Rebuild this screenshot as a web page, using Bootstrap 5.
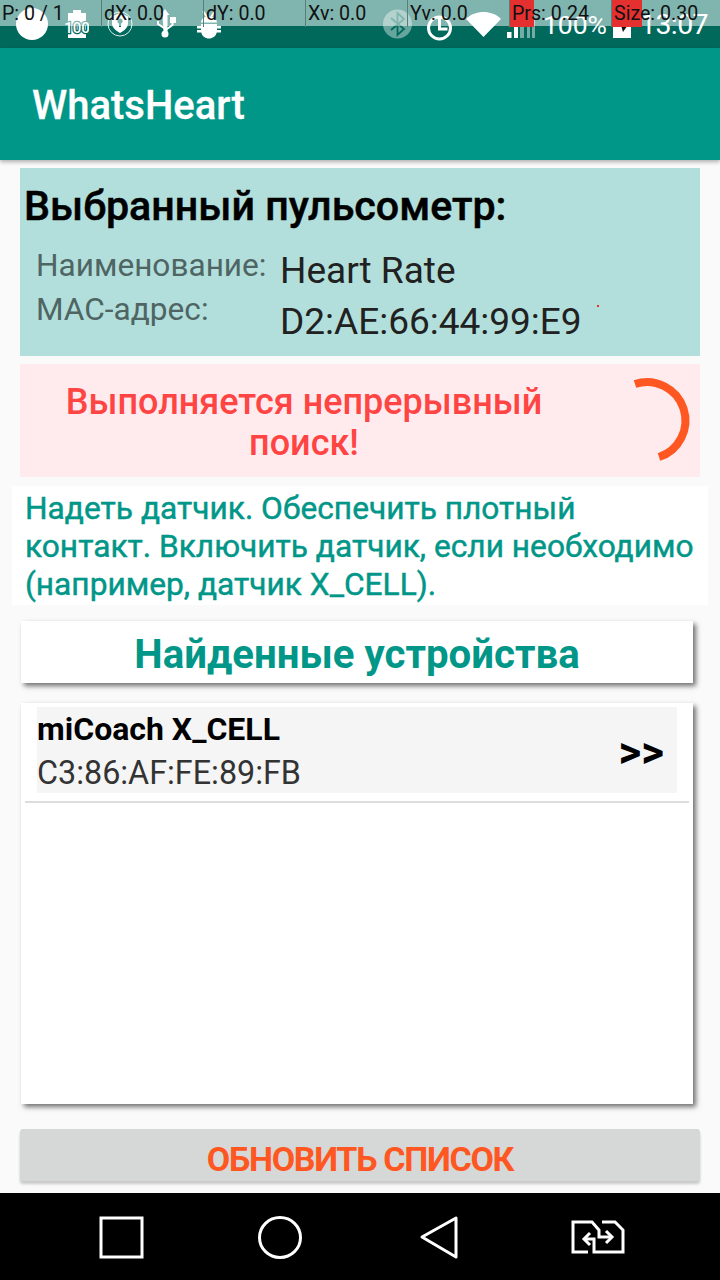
<!DOCTYPE html>
<html lang="ru"><head><meta charset="utf-8">
<link href="https://cdn.jsdelivr.net/npm/bootstrap@5.3.0/dist/css/bootstrap.min.css" rel="stylesheet">
<style>
html,body{width:720px;height:1280px;overflow:hidden}
body{background:#fafafa;font-family:Roboto,"Noto Sans",sans-serif;color:#212121}
.shell{height:1280px;width:720px}
.statusbar{height:48px;background:#00695c;position:relative;color:#fff}
.debug{position:absolute;left:0;top:0;width:720px;height:26px;background:rgba(255,255,255,.5);z-index:2;color:#111;font-size:19.6px;line-height:27px;display:grid;grid-template-columns:repeat(6,102px) 1fr}
.dcell{position:relative;padding-left:2px;white-space:nowrap}
.dcell:nth-child(n+2){border-left:1px solid #567f78;margin-left:-1px}
.dtxt{position:relative}
.dbar{position:absolute;left:0;top:0;bottom:0;background:#e53030}
.stat-row{position:absolute;left:0;right:0;top:0;height:48px;padding:0 12px 0 16px}
.stat-time{font-size:28.5px;letter-spacing:-.6px;line-height:50px;margin-left:9px}
.stat-pct{font-size:26.5px;line-height:50px;margin-left:7px}
.appbar{height:112px;background:#009688;color:#fff;font-size:40px;font-weight:500;padding-left:32px;box-shadow:0 2px 4px rgba(0,0,0,.3);line-height:116px;position:relative;-webkit-text-stroke:.3px #fff}
.content{height:1033px;padding-top:8px}
.chosen{margin:0 20px;height:188px;background:#b2dfdb;padding:16px 4px 0 4px;position:relative}
.chosen-title{font-size:41.2px;font-weight:500;color:#000;line-height:44px;-webkit-text-stroke:.5px #000;white-space:nowrap}
.chosen-grid{margin-top:17px;padding-left:12px}
.lbl{font-size:31.6px;width:244px;color:#4f6563;line-height:43.5px;flex:none;margin-top:-1px}
.val{font-size:37px;color:#212121;line-height:51px;white-space:nowrap}
.dot{position:absolute;left:577px;top:137px;width:2px;height:2px;background:#e53030}
.searching{margin:8px 20px 0;height:113px;background:#ffebee;position:relative;padding-top:18px}
.search-txt{width:568px;text-align:center;font-size:36px;line-height:41px;font-weight:500;color:#ff4444}
.spin{position:absolute;left:593px;top:5px}
.hint{margin:9px 12px 0;height:119px;background:#fff;padding:4px 12px 0 13px;font-size:31.7px;line-height:38px;color:#009688;font-weight:400;-webkit-text-stroke:.45px #009688;white-space:nowrap}
.found{margin:16px 27px 0 21px;height:62px;background:#fff;text-align:center;font-size:40.2px;font-weight:700;color:#009688;line-height:67px;box-shadow:3px 3px 5px rgba(0,0,0,.55)}
.devices{margin:20px 27px 0 21px;height:401px;background:#fff;box-shadow:3px 3px 5px rgba(0,0,0,.55);padding-top:4px}
.devrow{margin:0 16px;height:86px;background:#f5f5f5;padding-top:4px}
.devname{font-size:32px;font-weight:700;color:#000;line-height:41px}
.devmac{font-size:32.3px;color:#333;line-height:46px}
.arrows{font-size:44px;font-weight:700;color:#000;margin-right:13px;line-height:50px}
.divline{height:2px;background:#ddd;margin:8px 4px 0}
.refresh{display:block;margin:25px 20px 0;width:680px;height:52px;background:#d6d7d7;border:0;border-radius:3px;box-shadow:0 3px 3px rgba(0,0,0,.2);color:#ff5722;font-size:34px;font-weight:700;line-height:60px;padding:0;text-align:center;letter-spacing:-1.3px}
.navzone{height:87px;background:#000}
</style></head>
<body>
<div class="shell d-flex flex-column">
<div class="statusbar">
  <div class="stat-row d-flex align-items-start">
    <svg width="32" height="48" viewBox="0 0 32 48"><circle cx="16" cy="24" r="16" fill="#fff"/></svg>
    <svg width="24" height="48" viewBox="0 0 24 48" style="margin-left:17px"><path d="M8 10h8v3h5v25H3V13h5z" fill="#fff"/><text x="12" y="33" font-size="15" font-family="Roboto" font-weight="500" text-anchor="middle" fill="#fff" stroke="#00695c" stroke-width="2.500" paint-order="stroke">100</text></svg>
    <svg width="26" height="48" viewBox="0 0 26 48" style="margin-left:18px"><circle cx="13" cy="24" r="12" fill="none" stroke="#dfeeea" stroke-width="1"/><path d="M13 13l8 3.500v7c0 4-3.500 7-8 9.500-4.500-2.500-8-5.500-8-9.500v-7z" fill="#fff"/><circle cx="13" cy="21" r="2.600" fill="#00695c"/><rect x="12" y="22" width="2" height="5" fill="#00695c"/></svg>
    <svg width="24" height="48" viewBox="0 0 24 48" style="margin-left:20px"><path d="M9.500 15H7.500l4.500-6 4.500 6h-2v17h-4z" fill="#fff"/><circle cx="12" cy="34" r="3.500" fill="#fff"/><path d="M19.500 22v3l-7 5" fill="none" stroke="#fff" stroke-width="2"/><rect x="17" y="17" width="6" height="6" fill="#fff"/><path d="M5 21v3l6 4" fill="none" stroke="#fff" stroke-width="2"/></svg>
    <svg width="26" height="48" viewBox="0 0 26 48" style="margin-left:19px"><path d="M5 24h16v2h4v2.500h-4v1.500h4v2.500h-4.300C20 36 17 38.500 13 38.500S6 36 5.300 32.500H1V30h4v-1.500H1V26h4z" fill="#fff"/><path d="M5 22.500c.5-4 3-6 8-6s7.500 2 8 6z" fill="#fff"/><path d="M7 11l4 6M19 11l-4 6" stroke="#fff" stroke-width="2"/></svg>
    <div class="flex-grow-1"></div>
    <svg width="29" height="48" viewBox="0 0 29 48"><circle cx="14.500" cy="24" r="14.500" fill="#fff" opacity=".4"/><path d="M8 18l13 11-6.500 6V13l6.500 6-13 11" fill="none" stroke="#00695c" stroke-width="1.800"/></svg>
    <svg width="27" height="48" viewBox="0 0 27 48" style="margin-left:14px"><circle cx="13.500" cy="28" r="11" fill="none" stroke="#fff" stroke-width="3"/><path d="M13.500 18v11h8" fill="none" stroke="#fff" stroke-width="3"/></svg>
    <svg width="35" height="48" viewBox="0 0 35 48" style="margin-left:13px"><path d="M0 19C5 14 11 12 17.500 12S30 14 35 19L17.500 37z" fill="#fff"/></svg>
    <svg width="29" height="48" viewBox="0 0 29 48" style="margin-left:6px"><rect y="32" width="4.500" height="6" fill="#fff"/><rect x="7" y="27" width="4" height="11" fill="#fff"/><rect x="13" y="25" width="4" height="13" fill="#fff" opacity=".45"/><rect x="20" y="20" width="3" height="18" fill="#fff" opacity=".45"/><rect x="25" y="20" width="3" height="18" fill="#fff" opacity=".45"/></svg>
    <span class="stat-pct">100%</span>
    <svg width="18" height="48" viewBox="0 0 18 48" style="margin-left:6px"><path d="M0 22h18v16H0z" fill="#fff"/><path d="M7 22h10l-7 10z" fill="#111"/></svg>
    <span class="stat-time">13:07</span>
  </div>
  <div class="debug">
    <div class="dcell"><span class="dtxt">P: 0 / 1</span></div>
    <div class="dcell"><span class="dtxt">dX: 0.0</span></div>
    <div class="dcell"><span class="dtxt">dY: 0.0</span></div>
    <div class="dcell"><span class="dtxt">Xv: 0.0</span></div>
    <div class="dcell"><span class="dtxt">Yv: 0.0</span></div>
    <div class="dcell"><span class="dbar" style="width:24px"></span><span class="dtxt">Prs: 0.24</span></div>
    <div class="dcell"><span class="dbar" style="width:30px"></span><span class="dtxt">Size: 0.30</span></div>
  </div>
</div>
<div class="appbar">WhatsHeart</div>
<div class="content">
  <div class="chosen">
    <div class="chosen-title">Выбранный пульсометр:</div>
    <div class="d-flex chosen-grid">
      <div class="lbl">Наименование:<br>MAC-адрес:</div>
      <div class="val">Heart Rate<br>D2:AE:66:44:99:E9</div>
    </div>
    <div class="dot"></div>
  </div>
  <div class="searching">
    <div class="search-txt">Выполняется непрерывный поиск!</div>
    <svg class="spin" width="90" height="100" viewBox="0 0 90 100"><path d="M22 15A38 38 0 1 1 46 88" fill="none" stroke="#ff5722" stroke-width="8"/></svg>
  </div>
  <div class="hint">Надеть датчик. Обеспечить плотный<br>контакт. Включить датчик, если необходимо<br>(например, датчик X_CELL).</div>
  <div class="found">Найденные устройства</div>
  <div class="devices">
    <div class="devrow d-flex align-items-center justify-content-between">
      <div><div class="devname">miCoach X_CELL</div><div class="devmac">C3:86:AF:FE:89:FB</div></div>
      <div class="arrows">&gt;&gt;</div>
    </div>
    <div class="divline"></div>
  </div>
  <button class="refresh" type="button">ОБНОВИТЬ СПИСОК</button>
</div>
<div class="navzone">
  <svg class="d-block" width="720" height="87" viewBox="0 0 720 87">
    <rect x="101" y="25" width="41" height="39" fill="none" stroke="#fff" stroke-width="3"/>
    <ellipse cx="280" cy="44.500" rx="20.500" ry="20" fill="none" stroke="#fff" stroke-width="3"/>
    <path d="M456 25v39l-34-20z" fill="none" stroke="#fff" stroke-width="3" stroke-linejoin="round"/>
    <g transform="translate(560 17)" fill="none" stroke="#fff" stroke-width="3"><path d="M28 42H13V12H32L39 20V27H50"/><path d="M46 21L52 27L46 33"/><path d="M42 12H55L63 20V42H34V29H25"/><path d="M30 23L24 29L30 35"/></g>
  </svg>
</div>
</div>
</body></html>
